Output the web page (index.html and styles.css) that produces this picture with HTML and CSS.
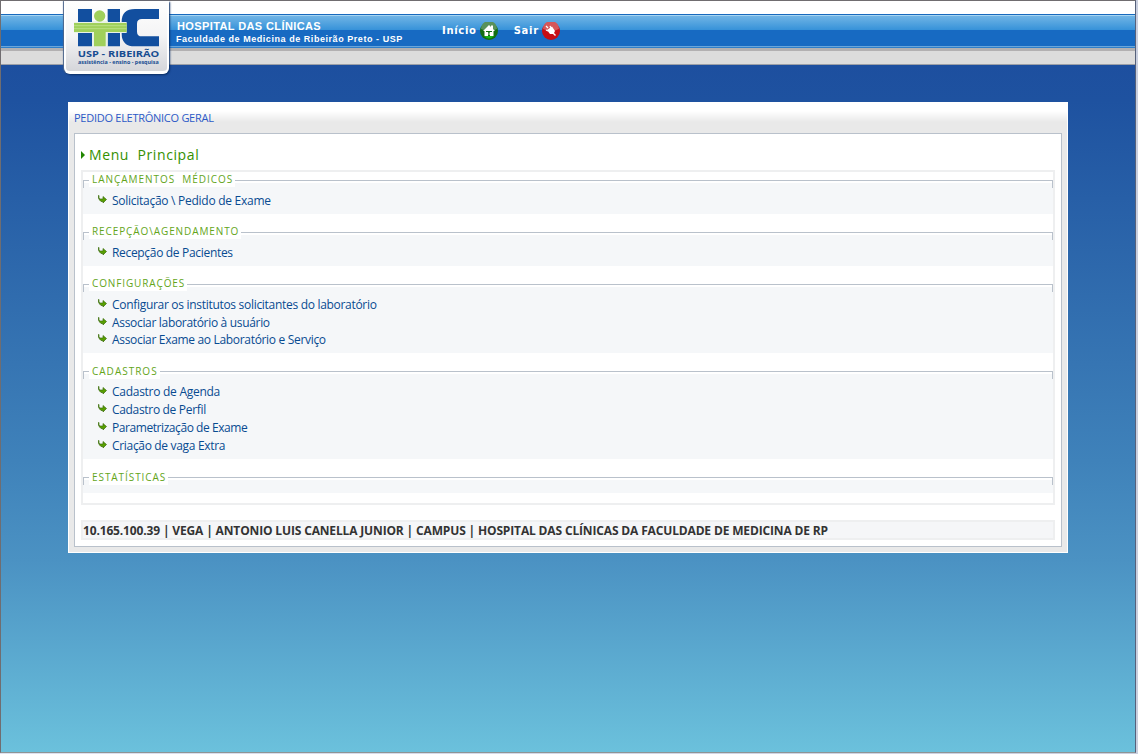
FILE: index.html
```html
<!DOCTYPE html>
<html lang="pt-BR">
<head>
<meta charset="utf-8">
<title>Pedido Eletrônico Geral</title>
<link rel="stylesheet" href="styles.css">
</head>
<body>
<svg width="0" height="0" class="defs"><defs>
<symbol id="arrow" viewBox="0 0 9 9"><path d="M1 .5V3.500L2.500 4H5V1.500L8.500 4.500L5 8V6.500H3L1.500 5L.5 3V.5Z" fill="#58a000" stroke="#3d6d10" stroke-width=".7"/></symbol>
</defs></svg>
<div class="page">
<header class="top">
<div class="logo">
<svg width="105" height="71" viewBox="0 0 315 213">
<g fill="#124f9f"><path d="M45 24H87V136H45ZM134 24H171V136H134Z"/><path d="M288 24V54H237Q222 54 222 68V92Q222 106 237 106H288V136H216Q176 136 176 98V62Q176 24 216 24Z"/></g>
<path d="M87 60H134V136H87ZM33 63H191V96H33Z" fill="#e9f2e6"/>
<g fill="#a0d05b"><circle cx="110" cy="45" r="17"/><path d="M33 66H191V93H33ZM93 66H128V136H93Z"/></g>
<path d="M33 74H191M33 83H191" stroke="#c6e798" stroke-width="2"/>
<text x="44" y="167" textLength="245" lengthAdjust="spacingAndGlyphs" class="logo-name">USP - RIBEIRÃO</text>
<text x="45" y="188" textLength="242" lengthAdjust="spacingAndGlyphs" class="logo-tag">assistência - ensino - pesquisa</text>
</svg>
</div>
<div class="titles"><h1>HOSPITAL DAS CLÍNICAS</h1><p>Faculdade de Medicina de Ribeirão Preto - USP</p></div>
<nav><a class="home"><span>Início</span>
<svg width="18" height="18" viewBox="0 0 18 18"><circle cx="9" cy="9" r="9" fill="#136d12"/><path d="M1 7A8 8 0 0 1 17 7Q9 11 1 7Z" fill="#59915a"/><path d="M4 14Q9 19 14 14Z" fill="#16b414"/><path d="M3 9L9 3L11 5V3.500H13V7L15 9H13.500V14H4.500V9Z" fill="#fff"/><path d="M6 9H12V10H10V14H8V10H6Z" fill="#136d12"/><path d="M8.700 10.500H9.500V13H8.700Z" fill="#fff"/></svg></a>
<a class="exit"><span>Sair</span>
<svg width="18" height="18" viewBox="0 0 18 18"><circle cx="9" cy="9" r="9" fill="#c70d14"/><path d="M1 7A8 8 0 0 1 17 7Q9 11 1 7Z" fill="#d55759"/><path d="M4 4L6 6M8 4L9 6M4 8L6 9" stroke="#fff" stroke-width="1.300"/><path d="M5 8L10 4.500L13 9L12 11L14 13L13 14L11 12L8 12Z" fill="#fff"/></svg></a></nav>
</header>
<main class="panel">
<div class="panel-title"><span>PEDIDO ELETRÔNICO GERAL</span></div>
<div class="inner">
<h2><i></i><span>Menu&nbsp; Principal</span></h2>
<div class="menu">
<section class="s1"><h3><span class="l1">LANÇAMENTOS&nbsp; MÉDICOS</span></h3><ul><li><svg><use href="#arrow"/></svg><a class="a1">Solicitação \ Pedido de Exame</a></li></ul></section>
<section class="s1"><h3><span class="l2">RECEPÇÃO\AGENDAMENTO</span></h3><ul><li><svg><use href="#arrow"/></svg><a class="a2">Recepção de Pacientes</a></li></ul></section>
<section class="s3"><h3><span class="l3">CONFIGURAÇÕES</span></h3><ul><li><svg><use href="#arrow"/></svg><a class="a3">Configurar os institutos solicitantes do laboratório</a></li><li><svg><use href="#arrow"/></svg><a class="a4">Associar laboratório à usuário</a></li><li><svg><use href="#arrow"/></svg><a class="a5">Associar Exame ao Laboratório e Serviço</a></li></ul></section>
<section class="s4"><h3><span class="l4">CADASTROS</span></h3><ul><li><svg><use href="#arrow"/></svg><a class="a6">Cadastro de Agenda</a></li><li><svg><use href="#arrow"/></svg><a class="a7">Cadastro de Perfil</a></li><li><svg><use href="#arrow"/></svg><a class="a8">Parametrização de Exame</a></li><li><svg><use href="#arrow"/></svg><a class="a9">Criação de vaga Extra</a></li></ul></section>
<section class="s5"><h3><span class="l5">ESTATÍSTICAS</span></h3></section>
</div>
<footer><span>10.165.100.39 | VEGA | ANTONIO LUIS CANELLA JUNIOR | CAMPUS | HOSPITAL DAS CLÍNICAS DA FACULDADE DE MEDICINA DE RP</span></footer>
</div>
</main>
</div>
</body>
</html>
```
FILE: styles.css
```css
* { box-sizing: border-box; margin: 0; padding: 0; }
html, body { height: 754px; overflow: hidden; }
body { background: linear-gradient(90deg, #dde2f0, #c9cfdf); font-family: "Open Sans", "Noto Sans", sans-serif; }
.defs { position: absolute; }
.page { width: 1136px; height: 753px; border: 1px solid #706d70; border-right-color: #56617a; border-bottom-color: #8e9494; background: linear-gradient(#1d4f9f 64px, #1e52a0 100px, #3f82ba 460px, #4b92c3 560px, #6bc1dc 751px); }
.top { height: 64px; display: flex; padding-left: 63px; background: linear-gradient(#fff 0 13px, #1769bd 13px 14px, #a5d4f1 14px 15px, #70b4e5 15px, #3692d9 29px, #176ac2 29px 45px, #6aa5da 45px 46px, #2e7fca 46px 47px, #b2b0b1 47px 50px, #dcdcdc 50px 63px, #9b9fa7 63px); }
.logo { width: 105px; height: 73px; flex: none; background: linear-gradient(#fff, #f4f4f5 50%, #d5d6da); border: 1px solid #fff; border-width: 0 2px 3px 2px; border-radius: 0 0 6px 6px; box-shadow: 1px 1px 2px #092d64, -1px 0 1px #50698d; position: relative; z-index: 1; }
.logo svg { display: block; margin-left: -3px; }
.logo-name { font: bold 26px "Open Sans", sans-serif; fill: #174d91; }
.logo-tag { font: bold 15px "Open Sans", sans-serif; fill: #174d91; }
.titles { width: 266px; padding: 18px 0 0 7px; color: #fff; font-family: "Liberation Sans", Arial, sans-serif; white-space: nowrap; }
h1 { font-size: 11px; line-height: 14px; letter-spacing: .39px; margin-left: 1px; }
.titles p { font-size: 9px; font-weight: bold; line-height: 12px; letter-spacing: .55px; }
nav { display: flex; gap: 16px; padding: 21px 0 0 7px; height: 39px; color: #fff; font: bold 10px/18px "DejaVu Sans", Verdana, sans-serif; letter-spacing: .7px; }
nav a { display: flex; gap: 3px; }
nav span { height: 18px; }
.panel { width: 1000px; height: 451px; margin: 37px 0 0 67px; padding: 0 5px; border: 1px solid #fff; background: linear-gradient(#fff 8px, #e9e9e9 19px); }
.panel-title { height: 30px; padding: 5px 0 0; color: #2c59c7; font-size: 11px; line-height: 20px; letter-spacing: -.27px; }
.inner { height: 414px; width: 988px; border: 1px solid #b9c1cb; background: #fff; padding: 12px 6px 0; }
h2 { height: 24px; display: flex; align-items: flex-start; color: #349000; font-size: 14px; line-height: 18px; font-weight: normal; letter-spacing: .6px; }
h2 i { width: 0; height: 0; border: 4px solid transparent; border-left-color: #228600; border-right: 0; margin: 5px 4px 0 0; }
.menu { border: 2px solid #eeeff0; height: 335px; padding-top: 8px; width: 974px; }
section { position: relative; background: linear-gradient(#fff 3px, #f5f7f9 3px); margin-bottom: 18px; height: 34px; }
section::before { content: ""; position: absolute; inset: 0 0 auto 0; height: 7px; border: 1px solid #b9c1cb; border-bottom: 0; }
.s3 { height: 69px; }
.s4 { height: 88px; }
.s5 { height: 16px; }
h3 { position: relative; height: 12px; font-size: 10px; line-height: 14px; font-weight: normal; color: #63a51a; letter-spacing: 1px; }
h3 span { display: inline-block; background: #fff; padding: 0 2px 0 3px; margin: -8px 0 0 6px; height: 15px; vertical-align: top; white-space: nowrap; }
h3 .l1 { letter-spacing: .96px; }
h3 .l2 { letter-spacing: .9px; }
h3 .l3 { letter-spacing: .88px; }
h3 .l4, h3 .l5 { margin-top: -7px; }
h3 .l5 { letter-spacing: .93px; }
ul { list-style: none; }
li { height: 17.700px; display: flex; padding-left: 15px; font-size: 12px; line-height: 18px; color: #084b91; letter-spacing: -.32px; white-space: nowrap; }
.s4 li { height: 18px; }
.a1, .a6 { letter-spacing: -.27px; }
.a3 { letter-spacing: -.3px; }
.a8 { letter-spacing: -.43px; }
li svg { width: 9px; height: 9px; margin: 3px 5px 0 0; }
footer { margin-top: 15px; width: 974px; height: 20px; border: 2px solid #eeeff0; background: #f5f6f8; color: #333; font-size: 12px; font-weight: bold; line-height: 17px; letter-spacing: -.15px; white-space: nowrap; }
```
